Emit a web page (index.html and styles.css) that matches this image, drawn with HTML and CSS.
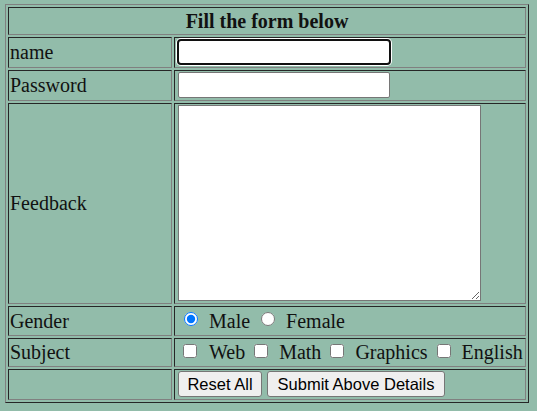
FILE: index.html
```html
<!DOCTYPE html>
<html lang="en">
<head>
<meta charset="utf-8">
<title>Feedback form</title>
<link rel="stylesheet" href="styles.css">
</head>
<body>
<form class="sheet">
  <div class="form-grid">
    <div class="cell heading">Fill the form below</div>

    <div class="cell label">name</div>
    <div class="cell field"><input type="text" class="text-input is-focused" name="name"></div>

    <div class="cell label">Password</div>
    <div class="cell field"><input type="password" class="text-input" name="password"></div>

    <div class="cell label">Feedback</div>
    <div class="cell field"><textarea class="feedback" name="feedback"></textarea></div>

    <div class="cell label">Gender</div>
    <div class="cell choices gender">
      <input type="radio" class="choice-input" name="gender" checked>
      <span class="choice-label">Male</span>
      <input type="radio" class="choice-input" name="gender">
      <span class="choice-label">Female</span>
    </div>

    <div class="cell label">Subject</div>
    <div class="cell choices subject">
      <input type="checkbox" class="choice-input">
      <span class="choice-label">Web</span>
      <input type="checkbox" class="choice-input">
      <span class="choice-label">Math</span>
      <input type="checkbox" class="choice-input">
      <span class="choice-label">Graphics</span>
      <input type="checkbox" class="choice-input">
      <span class="choice-label">English</span>
    </div>

    <div class="cell label"></div>
    <div class="cell actions">
      <button type="reset" class="btn btn-reset">Reset All</button>
      <button type="submit" class="btn btn-submit">Submit Above Details</button>
    </div>
  </div>
</form>
</body>
</html>
```

FILE: styles.css
```css
html, body {
  background: #92bcaa;
}

body {
  margin: 4px 0 0 5px;
  font-family: "Liberation Serif", "Times New Roman", serif;
  font-size: 20px;
  color: #111;
}

.sheet {
  margin: 0;
}

.form-grid {
  box-sizing: border-box;
  width: 524px;
  display: grid;
  grid-template-columns: 164px 352px;
  grid-template-rows: 28px 31px 31px 201px 30px 29px 31px;
  gap: 2px;
  padding: 2px;
  border: 1px solid;
  border-color: #808080 #262626 #262626 #808080;
}

.cell {
  box-sizing: border-box;
  border: 1px solid;
  border-color: #262626 #808080 #808080 #262626;
  padding: 1px;
  display: flex;
  align-items: center;
  line-height: 23px;
  white-space: nowrap;
}

.heading {
  grid-column: 1 / -1;
  justify-content: center;
  font-weight: bold;
}

.field {
  align-items: flex-start;
}

.text-input {
  box-sizing: border-box;
  width: 212px;
  height: 26px;
  margin: 0 0 0 2px;
  padding: 1px 2px;
  border: 1px solid #767676;
  border-radius: 2px;
  background: #fff;
  font: 16px "Liberation Sans", Arial, sans-serif;
  outline: none;
}

.text-input.is-focused {
  width: 214px;
  margin-left: 1px;
  border: 2px solid #101010;
  border-radius: 4px;
  box-shadow: 0 0 0 1px #ffffff;
}

.feedback {
  box-sizing: border-box;
  width: 303px;
  height: 196px;
  margin: 0 0 0 2px;
  padding: 2px;
  border: 1px solid #767676;
  border-radius: 0;
  background: #fff;
  font: 16px "Liberation Mono", monospace;
  resize: both;
  outline: none;
}

.choices {
  padding-left: 9px;
}

.subject {
  padding-left: 8px;
}

.choice-input {
  width: 14px;
  height: 14px;
  margin: 0 11px 4px 0;
  flex: none;
}

.subject .choice-input {
  margin: 0 11px 3px 0;
}

.subject .choice-input:first-child {
  margin-right: 12px;
}

.gender .choice-label {
  margin-right: 11px;
}

.subject .choice-label {
  margin-right: 9px;
}

.actions {
  align-items: flex-start;
  padding-left: 3px;
}

.btn {
  box-sizing: border-box;
  height: 26px;
  padding: 0;
  border: 1px solid #767676;
  border-radius: 3px;
  background: #efefef;
  color: #000;
  font: 16.5px "Liberation Sans", Arial, sans-serif;
  text-align: center;
  flex: none;
}

.btn-reset {
  width: 84px;
}

.btn-submit {
  width: 178px;
  margin-left: 5px;
}
```
